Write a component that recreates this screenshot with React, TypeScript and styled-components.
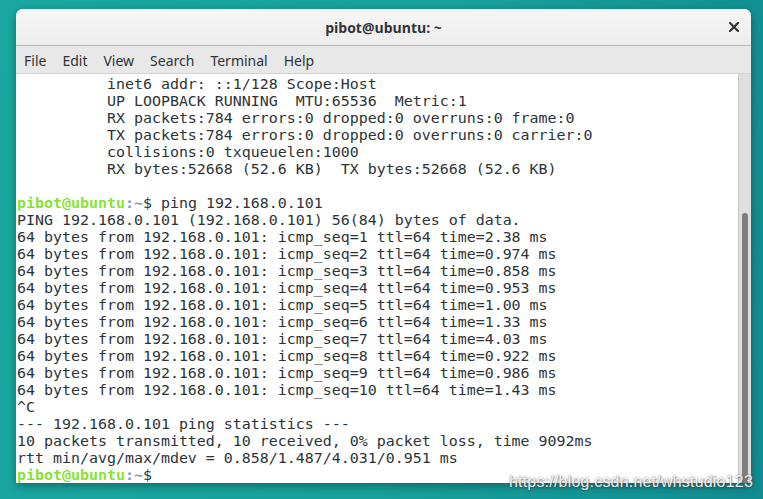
import React from 'react';
import styled, {createGlobalStyle} from 'styled-components';

const GlobalStyle = createGlobalStyle`
  html, body { margin: 0; padding: 0; }
  body {
    width: 763px;
    height: 499px;
    overflow: hidden;
    background: linear-gradient(100deg, #1aa7a0 0%, #17a09c 55%, #118b90 100%);
  }
`;

const Desktop = styled.div`
  position: relative;
  width: 763px;
  height: 499px;
  padding: 9px 12px 0 16px;
  box-sizing: border-box;
`;

const Window = styled.div`
  width: 735px;
  height: 474px;
  display: flex;
  flex-direction: column;
  border-radius: 7px 7px 0 0;
  overflow: hidden;
  background: #ffffff;
  box-shadow: 0 3px 9px rgba(0, 0, 0, 0.35);
`;

const TitleBar = styled.div`
  height: 36px;
  flex: 0 0 36px;
  display: grid;
  grid-template-columns: 40px 1fr 40px;
  align-items: center;
  background: linear-gradient(#f6f6f6, #ededed);
  border-bottom: 1px solid #b9b9b9;
  font-family: "Open Sans", "Noto Sans", sans-serif;
`;

const Title = styled.div`
  grid-column: 2;
  text-align: center;
  font-size: 14px;
  font-weight: 700;
  color: #2e3436;
  padding-top: 1px;
`;

const CloseButton = styled.div`
  display: flex;
  justify-content: center;
  padding-left: 6px;
`;

const MenuBar = styled.div`
  height: 27px;
  flex: 0 0 27px;
  display: flex;
  align-items: center;
  gap: 16px;
  padding-left: 8px;
  background: #e8e8e8;
  border-bottom: 1px solid #d3d3d3;
  font-family: "Noto Sans", "Open Sans", sans-serif;
  font-size: 14px;
  color: #2e3436;
`;

const MenuItem = styled.span`
  padding-top: 1px;
`;

const Body = styled.div`
  flex: 1;
  display: flex;
  min-height: 0;
`;

const Screen = styled.pre`
  flex: 1;
  margin: 0;
  padding: 2px 0 0 1px;
  font-family: "DejaVu Sans Mono", "Liberation Mono", monospace;
  font-size: 14.95px;
  line-height: 17px;
  color: #2e3436;
  overflow: hidden;
`;

const Line = styled.div`
  height: 17px;
  white-space: pre;
`;

const User = styled.span`
  color: #8ae234;
  font-weight: 700;
`;

const Path = styled.span`
  color: #729fcf;
  font-weight: 700;
`;

const Track = styled.div`
  width: 13px;
  flex: 0 0 13px;
  box-sizing: border-box;
  background: #dfdfdf;
  border-left: 1px solid #c6c6c6;
  display: flex;
  flex-direction: column;
  align-items: center;
  padding-top: 139px;
`;

const Thumb = styled.div`
  width: 6px;
  flex: 1;
  border-radius: 3px 3px 0 0;
  background: #7f7f7f;
`;

const Watermark = styled.div`
  position: absolute;
  right: 10px;
  bottom: 8px;
  font-family: "Liberation Sans", Arial, sans-serif;
  font-size: 16px;
  color: rgba(255, 255, 255, 0.9);
  text-shadow: 0 0 2px rgba(70, 70, 70, 0.75), 1px 1px 1px rgba(70, 70, 70, 0.4);
  letter-spacing: 0.2px;
`;

const output = [
  '          inet6 addr: ::1/128 Scope:Host',
  '          UP LOOPBACK RUNNING  MTU:65536  Metric:1',
  '          RX packets:784 errors:0 dropped:0 overruns:0 frame:0',
  '          TX packets:784 errors:0 dropped:0 overruns:0 carrier:0',
  '          collisions:0 txqueuelen:1000',
  '          RX bytes:52668 (52.6 KB)  TX bytes:52668 (52.6 KB)',
  '',
];

const times = ['2.38', '0.974', '0.858', '0.953', '1.00', '1.33', '4.03', '0.922', '0.986', '1.43'];

const pingLines = [
  'PING 192.168.0.101 (192.168.0.101) 56(84) bytes of data.',
  ...times.map((t, i) => `64 bytes from 192.168.0.101: icmp_seq=${i + 1} ttl=64 time=${t} ms`),
  '^C',
  '--- 192.168.0.101 ping statistics ---',
  '10 packets transmitted, 10 received, 0% packet loss, time 9092ms',
  'rtt min/avg/max/mdev = 0.858/1.487/4.031/0.951 ms',
];

const menus = ['File', 'Edit', 'View', 'Search', 'Terminal', 'Help'];

const Prompt = ({cmd}: {cmd?: string}) => (
  <Line>
    <User>pibot@ubuntu</User>
    <Path>:~</Path>$ {cmd}
  </Line>
);

const App = () => {
  return (
    <Desktop>
      <GlobalStyle />
      <Window>
        <TitleBar>
          <Title>pibot@ubuntu: ~</Title>
          <CloseButton>
            <svg width="10" height="10" viewBox="0 0 10 10">
              <path d="M1 1 L9 9 M9 1 L1 9" stroke="#2e3436" strokeWidth="2.2" strokeLinecap="square" />
            </svg>
          </CloseButton>
        </TitleBar>
        <MenuBar>
          {menus.map((m) => (
            <MenuItem key={m}>{m}</MenuItem>
          ))}
        </MenuBar>
        <Body>
          <Screen>
            {output.map((l, i) => (
              <Line key={'o' + i}>{l}</Line>
            ))}
            <Prompt cmd="ping 192.168.0.101" />
            {pingLines.map((l, i) => (
              <Line key={'p' + i}>{l}</Line>
            ))}
            <Prompt />
          </Screen>
          <Track>
            <Thumb />
          </Track>
        </Body>
      </Window>
      <Watermark>https://blog.csdn.net/whstudio123</Watermark>
    </Desktop>
  );
};

export default App;
